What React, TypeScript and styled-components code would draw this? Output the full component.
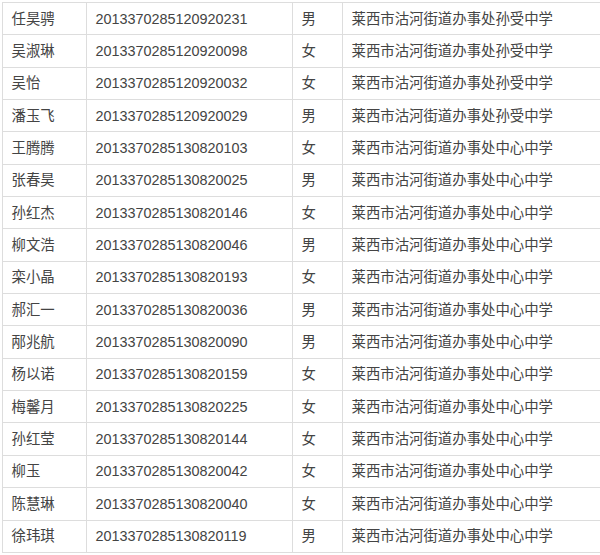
import React from "react";
import styled, { createGlobalStyle } from "styled-components";

const Global = createGlobalStyle`
  html, body { margin: 0; padding: 0; background: #fff; }
  body { overflow: hidden; }
`;

const Frame = styled.div`
  width: 600px;
  height: 555px;
  overflow: hidden;
  padding: 2px 0 0 2px;
  box-sizing: border-box;
`;

const Table = styled.table`
  border-collapse: collapse;
  table-layout: fixed;
  width: 720px;
  font-family: "Liberation Sans", "Noto Sans CJK SC", sans-serif;
  color: #444;
`;

const Col = styled.col<{ $w: number }>`
  width: ${(p) => p.$w}px;
`;

const Cell = styled.td`
  border: 1px solid #dddddd;
  height: 32.35px;
  padding: 0 0 0 8.5px;
  font-size: 14.4px;
  line-height: 20px;
  vertical-align: middle;
  white-space: nowrap;
  box-sizing: border-box;
`;

const rows: [string, string, string, string][] = [
  ["任昊骋", "2013370285120920231", "男", "莱西市沽河街道办事处孙受中学"],
  ["吴淑琳", "2013370285120920098", "女", "莱西市沽河街道办事处孙受中学"],
  ["吴怡", "2013370285120920032", "女", "莱西市沽河街道办事处孙受中学"],
  ["潘玉飞", "2013370285120920029", "男", "莱西市沽河街道办事处孙受中学"],
  ["王腾腾", "2013370285130820103", "女", "莱西市沽河街道办事处中心中学"],
  ["张春昊", "2013370285130820025", "男", "莱西市沽河街道办事处中心中学"],
  ["孙红杰", "2013370285130820146", "女", "莱西市沽河街道办事处中心中学"],
  ["柳文浩", "2013370285130820046", "男", "莱西市沽河街道办事处中心中学"],
  ["栾小晶", "2013370285130820193", "女", "莱西市沽河街道办事处中心中学"],
  ["郝汇一", "2013370285130820036", "男", "莱西市沽河街道办事处中心中学"],
  ["邴兆航", "2013370285130820090", "男", "莱西市沽河街道办事处中心中学"],
  ["杨以诺", "2013370285130820159", "女", "莱西市沽河街道办事处中心中学"],
  ["梅馨月", "2013370285130820225", "女", "莱西市沽河街道办事处中心中学"],
  ["孙红莹", "2013370285130820144", "女", "莱西市沽河街道办事处中心中学"],
  ["柳玉", "2013370285130820042", "女", "莱西市沽河街道办事处中心中学"],
  ["陈慧琳", "2013370285130820040", "女", "莱西市沽河街道办事处中心中学"],
  ["徐玮琪", "2013370285130820119", "男", "莱西市沽河街道办事处中心中学"],
];

export default function App() {
  return (
    <>
      <Global />
      <Frame>
        <Table>
          <colgroup>
            <Col $w={84} />
            <Col $w={206} />
            <Col $w={50} />
            <Col $w={380} />
          </colgroup>
          <tbody>
            {rows.map((r) => (
              <tr key={r[1]}>
                <Cell>{r[0]}</Cell>
                <Cell>{r[1]}</Cell>
                <Cell>{r[2]}</Cell>
                <Cell>{r[3]}</Cell>
              </tr>
            ))}
          </tbody>
        </Table>
      </Frame>
    </>
  );
}
